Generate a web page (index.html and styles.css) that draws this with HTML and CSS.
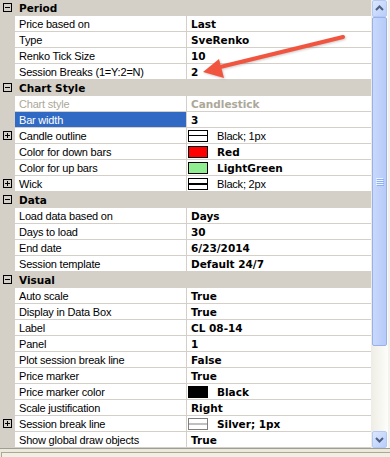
FILE: index.html
```html
<!DOCTYPE html>
<html lang="en">
<head>
  <meta charset="UTF-8" />
  <title>Chart Properties</title>
  <link rel="stylesheet" href="styles.css">
</head>
<body>

  <div class="panel">
    <div class="grid-wrap">
      <div class="grid">

        <div class="row cat"><div class="gutter"><span class="exp minus"></span></div><div class="cat-label">Period</div></div>
        <div class="row"><div class="gutter"></div><div class="name">Price based on</div><div class="value">Last</div></div>
        <div class="row"><div class="gutter"></div><div class="name">Type</div><div class="value">SveRenko</div></div>
        <div class="row"><div class="gutter"></div><div class="name">Renko Tick Size</div><div class="value">10</div></div>
        <div class="row"><div class="gutter"></div><div class="name">Session Breaks (1=Y:2=N)</div><div class="value">2</div></div>

        <div class="row cat"><div class="gutter"><span class="exp minus"></span></div><div class="cat-label">Chart Style</div></div>
        <div class="row"><div class="gutter"></div><div class="name disabled">Chart style</div><div class="value disabled">Candlestick</div></div>
        <div class="row"><div class="gutter"></div><div class="name selected">Bar width</div><div class="value">3</div></div>
        <div class="row"><div class="gutter"><span class="exp plus"></span></div><div class="name">Candle outline</div><div class="value plain"><span class="swatch stroke"><i class="line thin"></i></span>Black; 1px</div></div>
        <div class="row"><div class="gutter"></div><div class="name">Color for down bars</div><div class="value"><span class="swatch red"></span>Red</div></div>
        <div class="row"><div class="gutter"></div><div class="name">Color for up bars</div><div class="value"><span class="swatch green"></span>LightGreen</div></div>
        <div class="row"><div class="gutter"><span class="exp plus"></span></div><div class="name">Wick</div><div class="value plain"><span class="swatch stroke"><i class="line thick"></i></span>Black; 2px</div></div>

        <div class="row cat"><div class="gutter"><span class="exp minus"></span></div><div class="cat-label">Data</div></div>
        <div class="row"><div class="gutter"></div><div class="name">Load data based on</div><div class="value">Days</div></div>
        <div class="row"><div class="gutter"></div><div class="name">Days to load</div><div class="value">30</div></div>
        <div class="row"><div class="gutter"></div><div class="name">End date</div><div class="value">6/23/2014</div></div>
        <div class="row"><div class="gutter"></div><div class="name">Session template</div><div class="value">Default 24/7</div></div>

        <div class="row cat"><div class="gutter"><span class="exp minus"></span></div><div class="cat-label">Visual</div></div>
        <div class="row"><div class="gutter"></div><div class="name">Auto scale</div><div class="value">True</div></div>
        <div class="row"><div class="gutter"></div><div class="name">Display in Data Box</div><div class="value">True</div></div>
        <div class="row"><div class="gutter"></div><div class="name">Label</div><div class="value">CL 08-14</div></div>
        <div class="row"><div class="gutter"></div><div class="name">Panel</div><div class="value">1</div></div>
        <div class="row"><div class="gutter"></div><div class="name">Plot session break line</div><div class="value">False</div></div>
        <div class="row"><div class="gutter"></div><div class="name">Price marker</div><div class="value">True</div></div>
        <div class="row"><div class="gutter"></div><div class="name">Price marker color</div><div class="value"><span class="swatch black"></span>Black</div></div>
        <div class="row"><div class="gutter"></div><div class="name">Scale justification</div><div class="value">Right</div></div>
        <div class="row"><div class="gutter"><span class="exp plus"></span></div><div class="name">Session break line</div><div class="value"><span class="swatch stroke silver"><i class="line thick"></i></span>Silver; 1px</div></div>
        <div class="row"><div class="gutter"></div><div class="name">Show global draw objects</div><div class="value">True</div></div>

      </div>

      <div class="scrollbar">
        <div class="sb-btn">
          <svg width="15" height="17" viewBox="0 0 15 17"><polyline points="4,10 7.5,6.5 11,10" fill="none" stroke="#4d6185" stroke-width="2"/></svg>
        </div>
        <div class="sb-thumb">
          <svg width="8" height="8" viewBox="0 0 8 8">
            <rect x="0" y="0" width="7" height="1" fill="#eef4fe"/><rect x="1" y="1" width="7" height="1" fill="#8cb0f8"/>
            <rect x="0" y="2" width="7" height="1" fill="#eef4fe"/><rect x="1" y="3" width="7" height="1" fill="#8cb0f8"/>
            <rect x="0" y="4" width="7" height="1" fill="#eef4fe"/><rect x="1" y="5" width="7" height="1" fill="#8cb0f8"/>
            <rect x="0" y="6" width="7" height="1" fill="#eef4fe"/><rect x="1" y="7" width="7" height="1" fill="#8cb0f8"/>
          </svg>
        </div>
        <div class="sb-track"></div>
        <div class="sb-btn">
          <svg width="15" height="17" viewBox="0 0 15 17"><polyline points="4,7 7.5,10.5 11,7" fill="none" stroke="#4d6185" stroke-width="2"/></svg>
        </div>
      </div>
      <div class="edge"></div>
    </div>

    <div class="desc"></div>

    <!-- annotation arrow drawn over the grid -->
    <svg class="callout" width="390" height="457" viewBox="0 0 390 457">
      <line x1="343" y1="37" x2="216" y2="68" stroke="#f2553f" stroke-width="4" stroke-linecap="round"/>
      <polygon points="203,72 219,59 224,78" fill="#f2553f"/>
    </svg>
  </div>

</body>
</html>
```

FILE: styles.css
```css
body {
  margin: 0;
  background: #ece9d8;
  font-family: "Liberation Sans", Arial, sans-serif;
  font-size: 11px;
  color: #000;
}
.panel {
  position: relative;
  width: 390px;
  height: 457px;
  overflow: hidden;
}
.grid-wrap {
  display: flex;
  height: 448px;
  border-bottom: 1px solid #9d9d9d;
}
.grid {
  width: 371px;
  background: #fff;
}
.row {
  display: flex;
  height: 16px;
}
.gutter {
  flex: none;
  width: 15px;
  height: 16px;
  background: #d4d0c8;
}
.name, .value, .cat-label {
  height: 16px;
  box-sizing: border-box;
  border-bottom: 1px solid #d4d0c8;
  padding-top: 2px;
  line-height: 13px;
  white-space: nowrap;
  overflow: hidden;
}
.name {
  width: 171px;
  padding-left: 4px;
  letter-spacing: -0.2px;
}
.value {
  display: flex;
  width: 185px;
  border-left: 1px solid #d4d0c8;
  padding-left: 4px;
  font-family: "DejaVu Sans", Verdana, sans-serif;
  font-weight: bold;
  font-size: 10.5px;
}
.value.plain {
  font-family: "Liberation Sans", Arial, sans-serif;
  font-weight: normal;
  font-size: 11px;
  letter-spacing: -0.2px;
}
.cat .cat-label {
  width: 356px;
  background: #d4d0c8;
  padding-left: 4px;
  font-family: "DejaVu Sans", Verdana, sans-serif;
  font-weight: bold;
  font-size: 10.5px;
}
.disabled {
  color: #aca899;
}
.selected {
  background: #316ac5;
  color: #fff;
}
.exp {
  display: block;
  position: relative;
  width: 9px;
  height: 9px;
  box-sizing: border-box;
  margin: 3px 0 0 3px;
  border: 1px solid #000;
}
.exp::before {
  content: "";
  position: absolute;
  left: 1px;
  top: 3px;
  width: 5px;
  height: 1px;
  background: #000;
}
.exp.plus::after {
  content: "";
  position: absolute;
  left: 3px;
  top: 1px;
  width: 1px;
  height: 5px;
  background: #000;
}
.swatch {
  flex: none;
  width: 20px;
  height: 12px;
  box-sizing: border-box;
  margin: 0 9px 0 -3px;
  border: 1px solid #000;
  background: #fff;
}
.swatch.red { background: #ff0000; }
.swatch.green { background: #90ee90; }
.swatch.black { background: #000; }
.swatch.silver { border-color: #808080; }
.line {
  display: block;
  margin-top: 4px;
  background: #000;
}
.line.thin { height: 1px; }
.line.thick { height: 2px; }
.silver .line { background: #c0c0c0; }

/* xp style scrollbar */
.scrollbar {
  display: flex;
  flex-direction: column;
  width: 17px;
  background: linear-gradient(to right, #eeede5, #fdfdfa);
}
.sb-btn {
  height: 17px;
  width: 15px;
  margin-left: 1px;
  box-sizing: border-box;
  border: 1px solid #b4c8f6;
  border-radius: 2px;
  background: linear-gradient(to bottom right, #dce7fd, #b9cdfa);
}
.sb-btn svg {
  display: block;
  margin: -1px 0 0 -1px;
}
.sb-thumb {
  display: flex;
  align-items: center;
  justify-content: center;
  height: 329px;
  width: 15px;
  margin-left: 1px;
  box-sizing: border-box;
  border: 1px solid #98b1e9;
  border-radius: 2px;
  background: linear-gradient(to right, #c9d8fc, #b6cbf9);
}
.sb-track {
  flex: 1;
}
.edge {
  width: 2px;
  background: #f3f2ec;
}
.desc {
  height: 8px;
  margin: 3px 0 0 1px;
  border-top: 1px solid #aca899;
  border-left: 1px solid #aca899;
  background: #f1efe4;
}
.callout {
  position: absolute;
  left: 0;
  top: 0;
  pointer-events: none;
  filter: drop-shadow(1px 1px 1px rgba(0, 0, 0, 0.2));
}
```
